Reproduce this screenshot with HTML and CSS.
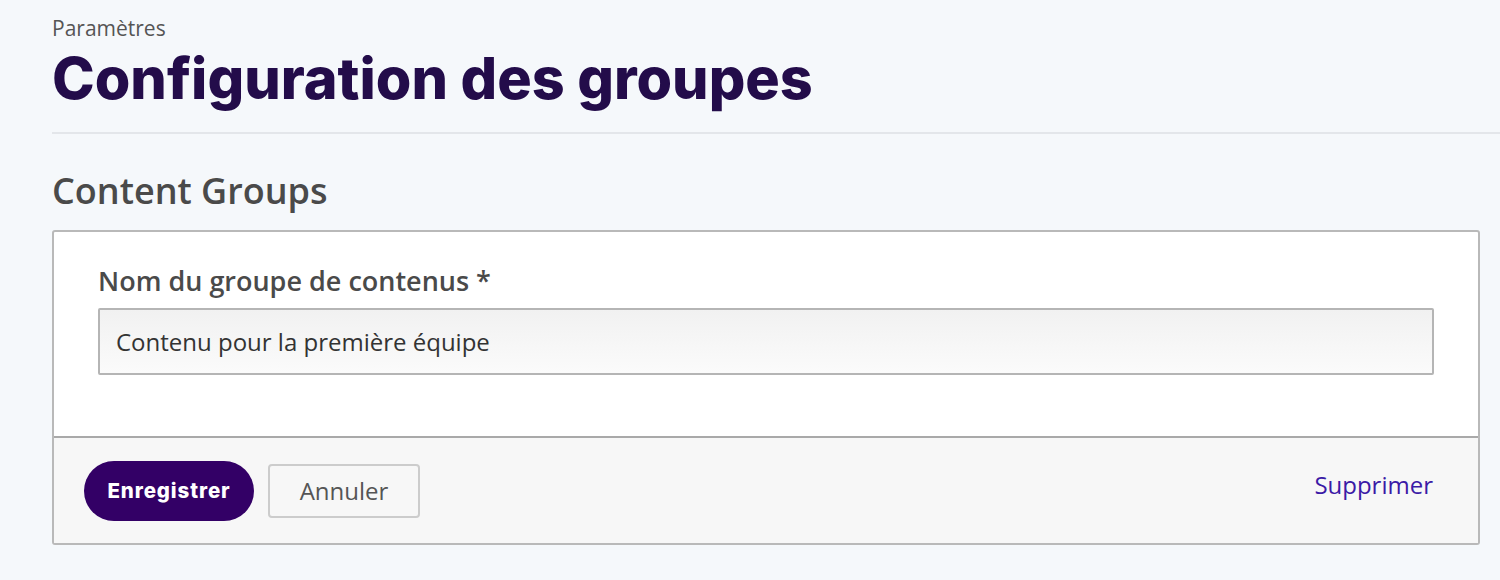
FILE: index.html
```html
<!DOCTYPE html>
<html lang="fr">
<head>
<meta charset="utf-8">
<link rel="stylesheet" href="styles.css">
</head>
<body>
<header class="page-header">
  <div class="breadcrumb">Paramètres</div>
  <h1 class="page-title">Configuration des groupes</h1>
</header>
<main class="content">
  <h2 class="section-title">Content Groups</h2>
  <form class="card">
    <div class="card-body">
      <label class="field-label" for="groupName">Nom du groupe de contenus *</label>
      <input class="text-input" id="groupName" type="text" value="Contenu pour la première équipe">
    </div>
    <div class="card-footer">
      <div class="actions">
        <button type="button" class="btn btn-primary">Enregistrer</button>
        <button type="button" class="btn btn-secondary">Annuler</button>
      </div>
      <a class="link-delete" href="#">Supprimer</a>
    </div>
  </form>
</main>
</body>
</html>
```
FILE: styles.css
```css
html, body {
  margin: 0;
  padding: 0;
  background: #f5f8fb;
  font-family: "Open Sans", "Liberation Sans", sans-serif;
  color: #4a4a4a;
}
body {
  padding-left: 52px;
  height: 580px;
  overflow: hidden;
}
.page-header {
  padding-top: 14px;
  padding-bottom: 19px;
  border-bottom: 2px solid #e3e6ea;
}
.breadcrumb {
  font-size: 21px;
  line-height: 29px;
  color: #555;
}
.page-title {
  margin: 0;
  font-family: "Inter", "DejaVu Sans", sans-serif;
  font-weight: 800;
  font-size: 57.5px;
  line-height: 70px;
  color: #230c4a;
}
.content {
  padding-right: 20px;
}
.section-title {
  margin: 35px 0 17px;
  font-size: 36px;
  line-height: 44px;
  font-weight: 600;
  color: #4a4a4a;
}
.card {
  display: block;
  border: 2px solid #b9b9b9;
  border-radius: 3px;
  background: #fff;
}
.card-body {
  padding: 31px 44px 61px;
  display: flex;
  flex-direction: column;
}
.field-label {
  font-size: 27px;
  line-height: 36px;
  font-weight: 600;
  color: #4a4a4a;
  margin-bottom: 9px;
}
.text-input {
  box-sizing: border-box;
  height: 67px;
  border: 2px solid #b5b5b5;
  border-radius: 2px;
  background: linear-gradient(#f1f1f1, #fbfbfb);
  padding: 0 16px;
  font-family: "Open Sans", "Liberation Sans", sans-serif;
  font-size: 24px;
  color: #333;
  outline: none;
}
.card-footer {
  border-top: 2px solid #a9a9a9;
  background: #f7f7f7;
  height: 107px;
  box-sizing: border-box;
  padding: 0 45px 0 30px;
  display: flex;
  align-items: center;
  justify-content: space-between;
}
.actions {
  display: flex;
  align-items: center;
  gap: 14px;
}
.btn {
  font-family: "Open Sans", "Liberation Sans", sans-serif;
  cursor: pointer;
}
.btn-primary {
  height: 60px;
  width: 170px;
  padding: 0;
  border: none;
  border-radius: 30px;
  background: #330066;
  color: #fff;
  font-family: "Inter", "DejaVu Sans", sans-serif;
  font-weight: 800;
  font-size: 20.5px;
  letter-spacing: 0.9px;
}
.btn-secondary {
  height: 54px;
  width: 152px;
  border: 2px solid #cccccc;
  border-radius: 4px;
  background: #f7f7f7;
  color: #555;
  font-size: 24px;
}
.link-delete {
  font-size: 24px;
  color: #3b1aa6;
  text-decoration: none;
  margin-top: -12px;
}
```
